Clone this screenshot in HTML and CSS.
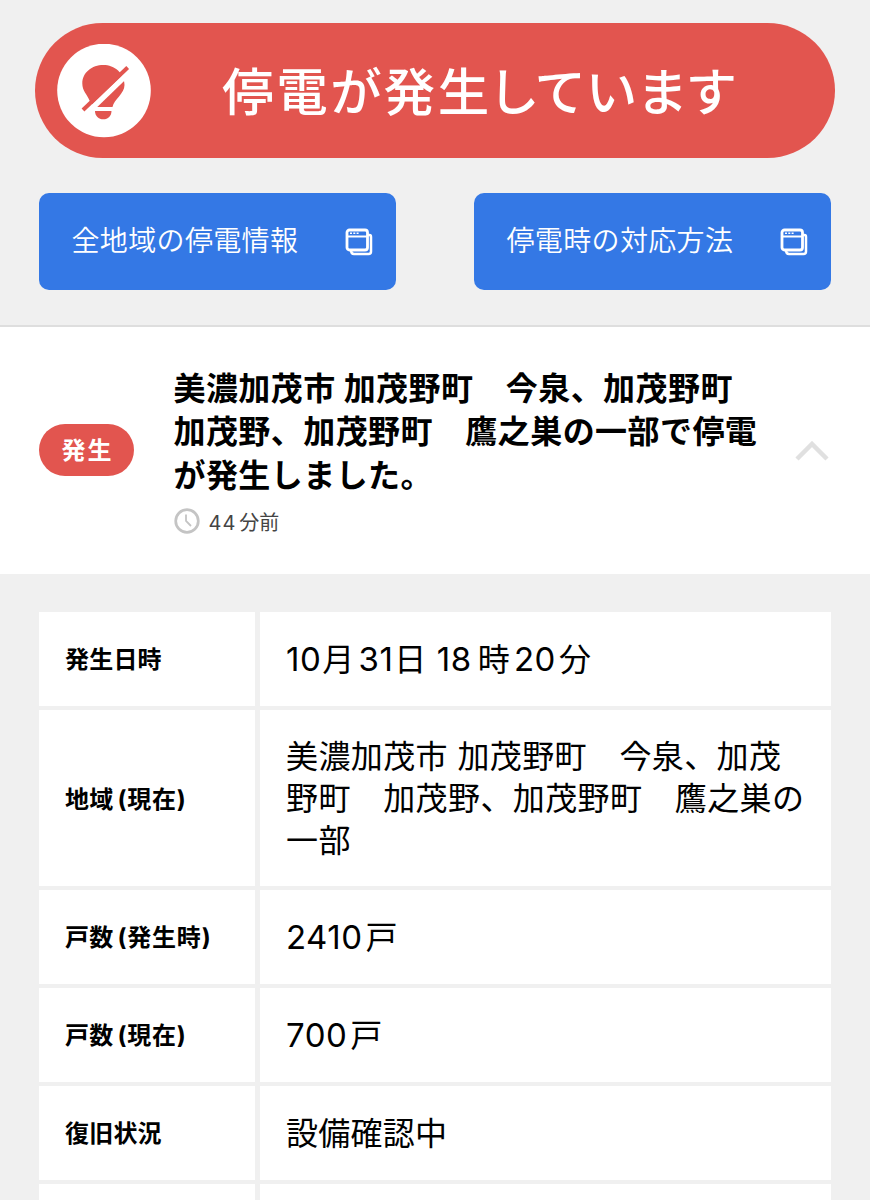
FILE: index.html
```html
<!DOCTYPE html>
<html lang="ja">
<head>
<meta charset="utf-8">
<title>停電情報</title>
<link rel="stylesheet" href="styles.css">
</head>
<body>
<main class="page">
  <header class="top">
    <div class="banner">
      <span class="banner-icon">
        <svg viewBox="0 0 94 94" width="94" height="94">
          <circle cx="47" cy="46.500" r="46.800" fill="#fff"/>
          <path d="M32.500 56.500C30 50 25.300 47 25.300 39.500C25.300 28.500 35 21 46.300 21C57.500 21 67.500 29 67.500 41C67.500 50 57 55 55.500 63H36C36 60 34 58 32.500 56.500Z" fill="#e2554f"/>
          <path d="M38 67H54.500C54.500 72 51 75.300 46.300 75.300C41.500 75.300 38 72 38 67Z" fill="#e2554f"/>
          <path d="M28 71L73.500 27" stroke="#fff" stroke-width="5.500"/>
          <path d="M26 66L70.700 23.500" stroke="#e2554f" stroke-width="4"/>
        </svg>
      </span>
      <h1 class="banner-title">停電が発生しています</h1>
    </div>
    <nav class="links">
      <a class="link"><span>全地域の停電情報</span>
        <svg class="window" viewBox="0 0 28 28" width="28" height="28" fill="none" stroke="#fff">
          <rect x="2" y="2" width="20.500" height="20" rx="2.500" stroke-width="2.800"/>
          <path d="M2 8.500H22" stroke-width="2"/>
          <path d="M5 5.300H14" stroke-width="1.500" stroke-dasharray="2 1.300"/>
          <path d="M23 7H24.500Q26 7 26 9V23.500Q26 26 23.500 26H9Q6 26 6 22" stroke-width="2.500"/>
        </svg>
      </a>
      <a class="link"><span>停電時の対応方法</span>
        <svg class="window" viewBox="0 0 28 28" width="28" height="28" fill="none" stroke="#fff">
          <rect x="2" y="2" width="20.500" height="20" rx="2.500" stroke-width="2.800"/>
          <path d="M2 8.500H22" stroke-width="2"/>
          <path d="M5 5.300H14" stroke-width="1.500" stroke-dasharray="2 1.300"/>
          <path d="M23 7H24.500Q26 7 26 9V23.500Q26 26 23.500 26H9Q6 26 6 22" stroke-width="2.500"/>
        </svg>
      </a>
    </nav>
  </header>
  <section class="event">
    <span class="badge">発生</span>
    <div class="event-body">
      <h2 class="event-title">美濃加茂市 加茂野町　今泉、加茂野町<br>加茂野、加茂野町　鷹之巣の一部で停電<br>が発生しました。</h2>
      <p class="time">
        <svg viewBox="0 0 26 26" width="26" height="26" fill="none" stroke="#c4c4c4">
          <circle cx="13" cy="13" r="11.300" stroke-width="2.700"/>
          <path d="M12 6.500V13L17 18" stroke-width="1.800"/>
        </svg>
        <span><span class="num">44</span>分前</span>
      </p>
    </div>
    <svg class="chevron" viewBox="0 0 34 20" width="34" height="20" fill="none" stroke="#e0e0e0" stroke-width="4.500"><path d="M2 18L17 3L32 18"/></svg>
  </section>
  <dl class="details">
    <dt>発生日時</dt><dd><span class="num month">10</span>月<span class="num day">31</span>日 <span class="num hour">18</span>時<span class="num minute">20</span>分</dd>
    <dt class="tall">地域<span class="paren">(現在)</span></dt><dd class="area">美濃加茂市 加茂野町　今泉、加茂<br>野町　加茂野、加茂野町　鷹之巣の<br>一部</dd>
    <dt>戸数<span class="paren">(発生時)</span></dt><dd><span class="num">2410</span>戸</dd>
    <dt>戸数<span class="paren">(現在)</span></dt><dd><span class="num">700</span>戸</dd>
    <dt>復旧状況</dt><dd>設備確認中</dd>
    <dt></dt><dd></dd>
  </dl>
</main>
</body>
</html>
```
FILE: styles.css
```css
* { box-sizing: border-box; margin: 0; padding: 0; }
body {
  background: #f0f0f0;
  color: #000;
  font-family: Inter, "Noto Sans CJK JP", sans-serif;
  text-autospace: no-autospace;
}
.page { width: 870px; height: 1200px; overflow: hidden; }
.top { height: 327px; padding: 23px 35px 0; border-bottom: 2px solid #dedede; }
.banner {
  display: flex; align-items: center;
  height: 135px; padding-left: 22px;
  border-radius: 68px; background: #e2554f; color: #fff;
}
.banner-icon { display: flex; width: 94px; height: 94px; }
.banner-title {
  margin-left: 71px; padding-top: 2px;
  font-size: 51.500px; font-weight: 500; line-height: 72px;
  font-feature-settings: "palt"; letter-spacing: 2.700px; white-space: nowrap;
}
.links { display: flex; justify-content: space-between; padding: 35px 4px 0; }
.link {
  display: flex; align-items: center; justify-content: space-between;
  width: 357px; height: 97px; padding: 0 23px 0 32.500px;
  border-radius: 10px; background: #3478e5; color: #fff;
  font-size: 28px; letter-spacing: .35px; font-weight: 350; white-space: nowrap;
}
.link span { padding-bottom: 5px; }
.event {
  display: flex; align-items: center;
  height: 247px; padding: 0 41px 0 39px; background: #fff;
}
.badge {
  display: flex; align-items: center; justify-content: center;
  width: 95px; height: 52px; border-radius: 26px; margin-bottom: 2px;
  background: #e2554f; color: #fff;
  font-size: 24px; font-weight: 700; letter-spacing: 2px; padding: 0 0 2px 2px;
}
.event-body { margin-left: 39.500px; width: 621.500px; }
.event-title { font-size: 32px; line-height: 43.500px; font-weight: 700; letter-spacing: .43px; white-space: nowrap; }
.time {
  display: flex; align-items: center; gap: 9px; margin-top: 11px;
  font-size: 20px; line-height: 26px; color: #444;
}
.time > span { padding-top: 2px; margin-bottom: -2px; }
.time .num { letter-spacing: 1px; margin-right: 3px; }
.details {
  display: grid; grid-template-columns: 216px 571px;
  grid-template-rows: 93.700px 176px repeat(4, 93.700px);
  column-gap: 5px; row-gap: 4.300px;
  padding: 38px 39px 0;
}
.details dt, .details dd { background: #fff; padding-left: 26px; white-space: nowrap; }
.details dt { font-size: 24px; font-weight: 700; line-height: 96px; height: 100%; letter-spacing: .2px; }
.details .tall { line-height: 179px; }
.paren { margin-left: 4px; letter-spacing: .8px; }
.details dd { font-size: 32px; line-height: 42px; padding-top: 27px; letter-spacing: .25px; }
.details .area { padding-top: 26px; letter-spacing: .4px; }
.details .num { margin-right: 3px; font-size: 33px; line-height: 1; letter-spacing: .5px; }
.details .month { margin-right: 1px; }
.details .day { margin: 0 1px 0 4px; }
.details .hour { margin: 0 6px 0 1px; }
.details .minute { margin-left: 4px; }
```
